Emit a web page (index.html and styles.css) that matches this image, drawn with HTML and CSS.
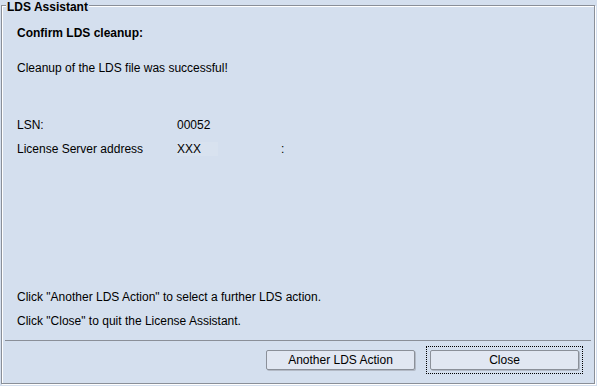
FILE: index.html
```html
<!DOCTYPE html>
<html>
<head>
<meta charset="utf-8">
<link rel="stylesheet" href="styles.css">
</head>
<body>
<div class="frame">
  <span class="title">LDS Assistant</span>
  <div class="content">
    <div class="line heading">Confirm LDS cleanup:</div>
    <div class="line msg">Cleanup of the LDS file was successful!</div>
    <div class="info">
      <div class="line">LSN:</div>
      <div class="line">00052</div>
      <div class="line">License Server address</div>
      <div class="line addr"><span class="redact">XXX</span><span class="tick">:</span></div>
    </div>
    <div class="bottom">
      <div class="line">Click "Another LDS Action" to select a further LDS action.</div>
      <div class="line second">Click "Close" to quit the License Assistant.</div>
    </div>
  </div>
  <div class="sep"></div>
  <div class="buttons">
    <button class="btn">Another LDS Action</button>
    <button class="btn focused">Close</button>
  </div>
</div>
</body>
</html>
```
FILE: styles.css
```css
html, body {
  margin: 0;
  padding: 0;
  background: #d4dfee;
}
body {
  font-family: "Liberation Sans", Arial, sans-serif;
  font-size: 12px;
  color: #000;
  width: 597px;
  height: 386px;
  overflow: hidden;
}
.frame {
  position: relative;
  box-sizing: border-box;
  margin: 5px 0 0 1px;
  width: 594px;
  height: 379px;
  border: 1px solid #8a8f98;
  box-shadow: inset 1px 1px 0 #ffffff, 1px 1px 0 #ffffff;
  display: flex;
  flex-direction: column;
}
.title {
  position: absolute;
  top: -6px;
  left: 4px;
  padding: 0 1px;
  font-weight: bold;
  line-height: 14px;
  background: #d4dfee;
}
.content {
  flex: 1;
  display: flex;
  flex-direction: column;
  padding: 20px 15px 12px 15px;
}
.line {
  line-height: 14px;
  white-space: nowrap;
}
.heading {
  font-weight: bold;
}
.msg {
  margin-top: 21px;
}
.info {
  margin-top: 43px;
  display: grid;
  grid-template-columns: 160px auto;
  row-gap: 10px;
}
.addr {
  display: flex;
  align-items: center;
}
.redact {
  display: inline-block;
  width: 41px;
  background: #d8e2ef;
  line-height: 14px;
}
.tick {
  margin-left: 63px;
}
.bottom {
  margin-top: auto;
}
.second {
  margin-top: 10px;
}
.sep {
  height: 1px;
  margin: 0 3px;
  background: #8a8f98;
}
.buttons {
  display: flex;
  justify-content: flex-end;
  gap: 15px;
  padding: 9px 15px 13px 15px;
}
.btn {
  position: relative;
  box-sizing: border-box;
  width: 149px;
  height: 20px;
  padding: 0;
  font-family: "Liberation Sans", Arial, sans-serif;
  font-size: 12px;
  line-height: 18px;
  color: #000;
  background: #e1e7f2;
  border: 1px solid #8b9099;
  border-radius: 2px;
  box-shadow: 1px 1px 0 #b3bac6;
}
.focused::after {
  content: "";
  position: absolute;
  left: -5px;
  top: -5px;
  right: -5px;
  bottom: -5px;
  border: 1px dotted #000;
}
```
